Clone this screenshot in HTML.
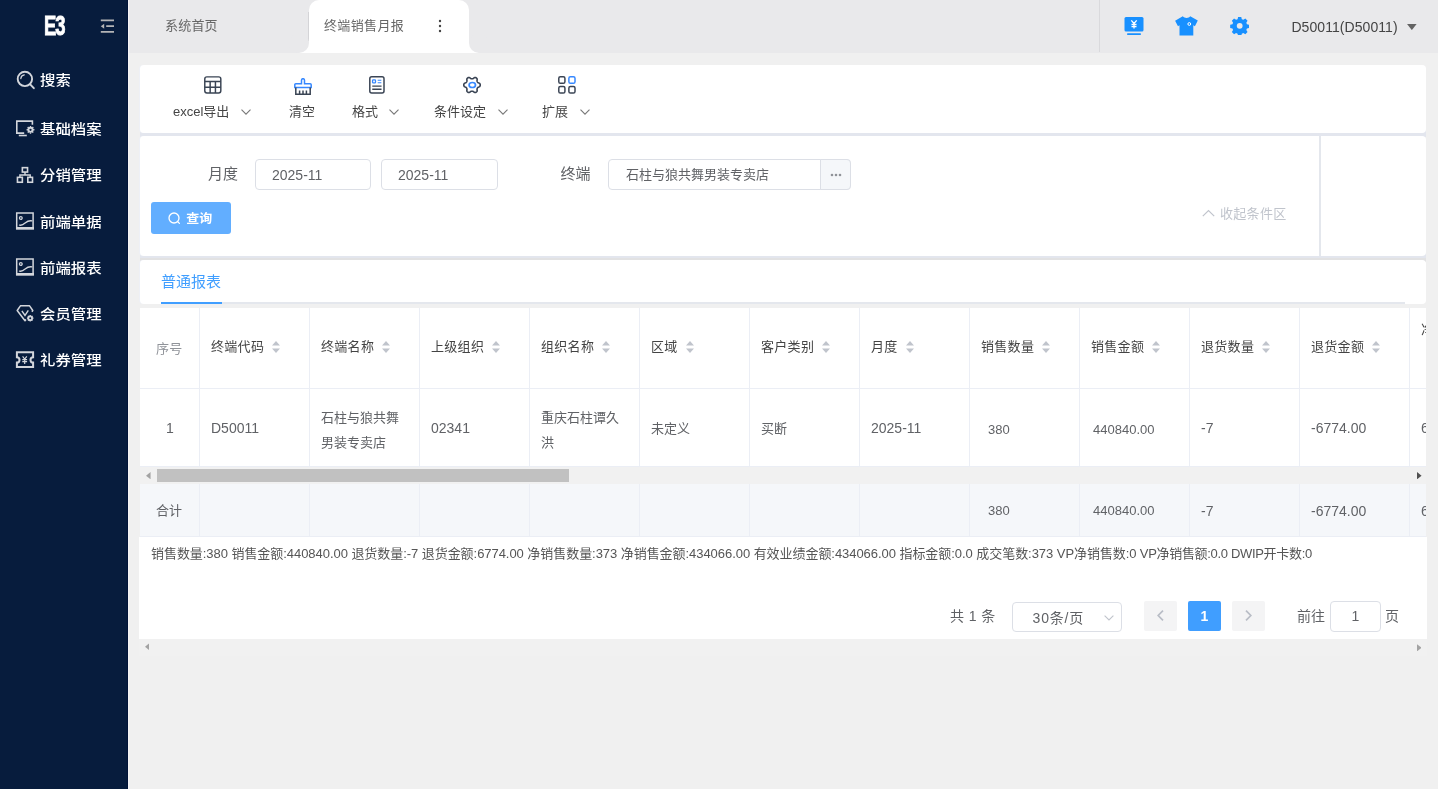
<!DOCTYPE html>
<html lang="zh-CN">
<head>
<meta charset="utf-8">
<title>终端销售月报</title>
<style>
*{box-sizing:border-box;margin:0;padding:0}
html,body{width:1438px;height:789px;overflow:hidden}
body{position:relative;will-change:transform;background:#f0f0f0;font-family:"Liberation Sans","Noto Sans CJK SC",sans-serif;font-size:13px;color:#606266}
.abs{position:absolute}
/* sidebar */
#side{position:absolute;left:0;top:0;width:128px;height:789px;background:#071c3d}
#side .logo{position:absolute;left:43.500px;top:8.500px;font-size:28px;font-weight:700;color:#fff;-webkit-text-stroke:.9px #fff;letter-spacing:-1.500px;line-height:34px;transform:scaleX(.66);transform-origin:0 0}
#side .mi{position:absolute;left:0;width:128px;height:24px;line-height:24px;color:#fff;font-size:15.400px;letter-spacing:0;font-weight:500;white-space:nowrap}
#side .mi span{position:absolute;left:40px;top:.5px;transform:scaleY(.89);transform-origin:0 50%}
#side .mi svg{position:absolute;left:15px}
/* topbar */
#top{position:absolute;left:128px;top:0;width:1310px;height:53px;background:#e9e9eb}
#top .t1{position:absolute;left:37px;top:.4px;line-height:52px;font-size:13px;letter-spacing:.2px;color:#666}
#tabA{position:absolute;left:181px;top:0;width:160px;height:53px;background:#fff;border-radius:10px 10px 0 0}
#tabA .tx{position:absolute;left:15px;top:.4px;line-height:52px;font-size:13px;letter-spacing:.35px;color:#666;white-space:nowrap}
.cornL,.cornR{position:absolute;top:43px;width:10px;height:10px;background:#fff}
.cornL{left:171px}.cornR{left:341px}
.cornL:after,.cornR:after{content:"";position:absolute;top:-10px;width:20px;height:20px;border-radius:10px;background:#e9e9eb}
.cornL:after{left:-10px}.cornR:after{left:0}
/* panels */
.panel{position:absolute;left:140px;width:1286px;background:#fff;border-radius:4px;box-shadow:-1px 0 0 #eef0f6}
.tb{position:absolute;top:0;height:66px;text-align:center;font-size:13px;color:#444;white-space:nowrap}
.tb svg{position:absolute}
.lb{top:36.500px;line-height:20px;font-size:13px;color:#444;white-space:nowrap}
.inp{position:absolute;height:31px;border:1px solid #dcdfe6;border-radius:4px;background:#fff;font-size:14px;color:#606266;line-height:30px;white-space:nowrap}
/* table */
.th,.td{position:absolute;white-space:nowrap}.th{letter-spacing:.3px}
</style>
</head>
<body>
<div id="side">
  <div class="logo">E3</div>
  <svg class="abs" style="left:100px;top:19px" width="15" height="15" viewBox="0 0 15 15" fill="none" stroke="#b4b4b6" stroke-width="1.700"><path d="M0.800 1.400h13.200M6.200 7.100h7.800M0.800 12.900h13.200"/><path d="M4.200 4.700v5L0.800 7.200z" fill="#b4b4b6" stroke="none"/></svg>
  <div class="mi" style="top:68px"><svg style="top:2px" width="20" height="20" viewBox="0 0 20 20" fill="none" stroke="#d3d6dc" stroke-width="1.600"><circle cx="9.900" cy="8.900" r="7.200" stroke-width="1.900"/><path d="M15.200 14.300l3.600 3.900" stroke-linecap="round" stroke-width="1.900"/><path d="M5.800 8.600a4.100 4.100 0 0 1 3.500-3.700" stroke-width="1.200" stroke-linecap="round"/></svg><span>搜索</span></div>
  <div class="mi" style="top:117px"><svg style="top:1px" width="20" height="20" viewBox="0 0 20 20" fill="none" stroke="#d3d6dc" stroke-width="1.600"><path d="M17.400 6.700V3.100H1.800v12H9.200"/><path d="M3.800 17.500h8"/><circle cx="15.500" cy="11.800" r="2.100" stroke-width="1.900"/><path d="M15.500 7.900v1.300M15.500 14.400v1.300M11.600 11.800h1.300M18.100 11.800h1.300M12.700 9l.9.900M17.400 13.700l.9.900M18.300 9l-.9.900M13.600 13.700l-.9.900" stroke-width="1.400"/></svg><span>基础档案</span></div>
  <div class="mi" style="top:163px"><svg style="top:2px" width="20" height="20" viewBox="0 0 20 20" fill="none" stroke="#d3d6dc" stroke-width="1.600"><rect x="7.350" y="2.650" width="5.200" height="4.400"/><rect x="2.450" y="12.350" width="4.900" height="4.900"/><rect x="12.800" y="12.350" width="4.700" height="4.900"/><path d="M10 7.100v3M4.900 12.300v-2.300h10.300v2.300" stroke-width="1.400"/></svg><span>分销管理</span></div>
  <div class="mi" style="top:210px"><svg style="top:2px" width="20" height="20" viewBox="0 0 20 20" fill="none" stroke="#d3d6dc" stroke-width="1.600"><path d="M1.700 .900h16.400v15.600H1.700z" stroke-width="1.500"/><path d="M1 16.300h18" stroke-width="2.600"/><circle cx="5.800" cy="6" r="1.400" stroke-width="1.200"/><path d="M4 13c3.200 1 4.700-.7 6.500-2.300s3.700-2.400 6.800-1.800" stroke-width="1.300"/></svg><span>前端单据</span></div>
  <div class="mi" style="top:256px"><svg style="top:2px" width="20" height="20" viewBox="0 0 20 20" fill="none" stroke="#d3d6dc" stroke-width="1.600"><path d="M1.700 .900h16.400v15.600H1.700z" stroke-width="1.500"/><path d="M1 16.300h18" stroke-width="2.600"/><circle cx="5.800" cy="6" r="1.400" stroke-width="1.200"/><path d="M4 13c3.200 1 4.700-.7 6.500-2.300s3.700-2.400 6.800-1.800" stroke-width="1.300"/></svg><span>前端报表</span></div>
  <div class="mi" style="top:302px"><svg style="top:2px" width="20" height="20" viewBox="0 0 20 20" fill="none" stroke="#d3d6dc" stroke-width="1.600"><path d="M11 15.500L10 16.700 2.200 6.500l3.200-4.700h9.200l3.200 4.700-.900 1.200" stroke-width="1.500" stroke-linejoin="round"/><path d="M6.900 6.800l3.100 4.600 3.300-5" stroke-width="1.400"/><g transform="translate(-.8 0)"><circle cx="16" cy="14.200" r="1.900" stroke-width="1.800"/><path d="M16 10.900v1.200M16 16.300v1.200M12.700 14.200h1.200M18.100 14.200h1.200M13.700 11.900l.9.900M17.400 15.600l.9.900M18.300 11.900l-.9.900M14.600 15.600l-.9.900" stroke-width="1.300"/></g></svg><span>会员管理</span></div>
  <div class="mi" style="top:348.500px"><svg style="top:1.500px" width="20" height="20" viewBox="0 0 20 20" fill="none" stroke="#d3d6dc" stroke-width="1.600"><path d="M1.900 2.300h16.200v5a2.600 2.600 0 0 0 0 5.200v4.600H1.900v-4.600a2.600 2.600 0 0 0 0-5.200z" stroke-width="2"/><path d="M7.600 6.300L9.700 9l2.100-2.700M9.700 9v5M7.300 9.600h4.800M7.300 11.700h4.800" stroke-width="1.200"/></svg><span>礼券管理</span></div>
</div>
<div class="abs" style="left:127px;top:0;width:1px;height:789px;background:#011338;z-index:3"></div><div class="abs" style="left:128px;top:0;width:1px;height:789px;background:#f5f4f6;z-index:3"></div>
<div id="top">
  <div class="t1">系统首页</div>
  <div class="abs" style="left:180px;top:12px;width:1px;height:29px;background:#d4d4d7"></div><div class="cornL"></div><div class="cornR"></div>
  <div id="tabA"><div class="tx">终端销售月报</div>
    <svg class="abs" style="left:128px;top:19px" width="6" height="14" viewBox="0 0 6 14" fill="#444"><circle cx="3" cy="2" r="1.2"/><circle cx="3" cy="7" r="1.2"/><circle cx="3" cy="12" r="1.2"/></svg>
  </div>
  <div class="abs" style="left:971px;top:0;width:1px;height:52px;background:#d9d9dc"></div>
  <svg class="abs" style="left:995.800px;top:16.500px" width="20" height="19" viewBox="0 0 20 19"><rect x="0.500" y="0" width="19" height="14.500" rx="1.500" fill="#1890ff"/><rect x="3" y="16.300" width="14" height="1.700" rx=".8" fill="#1890ff"/><path d="M7.300 3.300L10 6.500l2.700-3.200M10 6.500v5M7.500 7.300h5M7.500 9.500h5" stroke="#fff" stroke-width="1.300" fill="none"/></svg>
  <svg class="abs" style="left:1047px;top:16px" width="23" height="20" viewBox="0 0 23 20"><path d="M7.800 .300C9.500 2.600 13.800 2.600 15.200 .300L22.800 4.500 19.900 10.300 18.300 9.300V19.400H4.500V9.300L3 10.300 0.100 4.800z" fill="#1890ff"/><circle cx="14.300" cy="8" r="1.400" fill="none" stroke="#fff" stroke-width="1"/></svg>
  <svg class="abs" style="left:1101.500px;top:15.600px" width="19.400" height="19.400" viewBox="0 0 22 22"><path d="M9.200 1h3.600l.6 2.600 1.700.7 2.300-1.400 2.500 2.500-1.400 2.300.7 1.700 2.600.6v3.600l-2.600.6-.7 1.700 1.400 2.300-2.500 2.500-2.300-1.400-1.700.7-.6 2.600H9.200l-.6-2.600-1.700-.7-2.300 1.400-2.500-2.500 1.400-2.300-.7-1.700L.2 13.600V10l2.600-.6.700-1.700-1.400-2.300 2.500-2.500 2.300 1.400 1.700-.7z" fill="#1890ff" /><circle cx="11" cy="11.200" r="3.300" fill="#e9e9eb"/></svg>
  <div class="abs" style="left:1163.400px;top:.6px;line-height:52px;font-size:14px;letter-spacing:.07px;color:#444;white-space:nowrap">D50011(D50011)</div>
  <svg class="abs" style="left:1279px;top:23.700px" width="9.700" height="6.100" viewBox="0 0 11 7"><path d="M0 0h11L5.500 7z" fill="#636363"/></svg>
</div>
<div class="abs" style="left:140px;top:128px;width:1286px;height:9px;background:#e3e6ee"></div>
<div class="abs" style="left:140px;top:252px;width:1286px;height:5.500px;background:#e3e6ee"></div>
<div class="abs" style="left:140px;top:257.500px;width:1286px;height:4px;background:#e2e2e3"></div>
<div class="panel" id="p1" style="top:65px;height:67.500px">
  <svg class="abs" style="left:64.300px;top:11px" width="17.600" height="17.800" viewBox="0 0 18 18" fill="none" stroke="#3a4454" stroke-width="1.500"><rect x=".8" y=".8" width="16.400" height="16.400" rx="2.200"/><path d="M.8 5.600h16.400M.8 11.400h16.400M6.300 5.600v11.600M11.700 5.600v11.600"/></svg>
  <div class="abs lb" style="left:33px">excel导出</div><svg class="abs" style="left:101.300px;top:43.600px" width="10" height="6" viewBox="0 0 10 6" fill="none" stroke="#787878" stroke-width="1.100"><path d="M.5.600l4.500 4.500L9.500.600"/></svg>
  <svg class="abs" style="left:154px;top:13px" width="18" height="17" viewBox="0 0 18 17" fill="none" stroke-width="1.500"><path d="M7.500 5.700V2.200a1.500 1.500 0 0 1 3 0v3.500h5.700a1 1 0 0 1 1 1v2.700H.8V6.700a1 1 0 0 1 1-1z" stroke="#3688ff"/><path d="M1.800 9.400v6.800h14.400V9.400M5.600 12.600v3.600M9 12.600v3.600M12.400 12.600v3.600" stroke="#3a4454"/></svg>
  <div class="abs lb" style="left:149px">清空</div>
  <svg class="abs" style="left:229px;top:11px" width="15.800" height="17.800" viewBox="0 0 16 18" fill="none" stroke-width="1.500"><rect x=".8" y=".8" width="14.400" height="16.400" rx="2" stroke="#3a4454"/><rect x="3.600" y="4" width="3" height="3" rx=".8" stroke="#3688ff" stroke-width="1.300"/><path d="M8.800 4.300h3.700M8.800 6.800h3.700" stroke="#3688ff" stroke-width="1.200"/><path d="M3.300 10.300h9.400M3.300 13.400h9.400" stroke="#3a4454" stroke-width="1.300"/></svg>
  <div class="abs lb" style="left:212px">格式</div><svg class="abs" style="left:248.700px;top:43.600px" width="10" height="6" viewBox="0 0 10 6" fill="none" stroke="#787878" stroke-width="1.100"><path d="M.5.600l4.500 4.500L9.500.600"/></svg>
  <svg class="abs" style="left:323px;top:11px" width="18" height="18" viewBox="0 0 18 18" fill="none" stroke-width="1.600"><path d="M17.30 9.00L17.23 9.54L17.03 10.06L16.69 10.53L16.00 10.88L15.31 11.14L14.91 11.45L14.60 11.76L14.37 12.10L14.20 12.47L14.08 12.89L14.01 13.39L14.13 14.13L14.17 14.89L13.93 15.43L13.58 15.86L13.15 16.19L12.65 16.40L12.10 16.49L11.52 16.42L10.88 16.00L10.30 15.53L9.83 15.34L9.41 15.24L9.00 15.20L8.59 15.24L8.17 15.34L7.70 15.53L7.12 16.00L6.48 16.42L5.90 16.49L5.35 16.40L4.85 16.19L4.42 15.86L4.07 15.43L3.83 14.89L3.87 14.13L3.99 13.39L3.92 12.89L3.80 12.47L3.63 12.10L3.40 11.76L3.09 11.45L2.69 11.14L2.00 10.88L1.31 10.53L0.97 10.06L0.77 9.54L0.70 9.00L0.77 8.46L0.97 7.94L1.31 7.47L2.00 7.12L2.69 6.86L3.09 6.55L3.40 6.24L3.63 5.90L3.80 5.53L3.92 5.11L3.99 4.61L3.87 3.87L3.83 3.11L4.07 2.57L4.42 2.14L4.85 1.81L5.35 1.60L5.90 1.51L6.48 1.58L7.12 2.00L7.70 2.47L8.17 2.66L8.59 2.76L9.00 2.80L9.41 2.76L9.83 2.66L10.30 2.47L10.88 2.00L11.52 1.58L12.10 1.51L12.65 1.60L13.15 1.81L13.58 2.14L13.93 2.57L14.17 3.11L14.13 3.87L14.01 4.61L14.08 5.11L14.20 5.53L14.37 5.90L14.60 6.24L14.91 6.55L15.31 6.86L16.00 7.12L16.69 7.47L17.03 7.94L17.23 8.46z" stroke="#3a4454" stroke-linejoin="round"/><ellipse cx="9.300" cy="9" rx="3.200" ry="2.500" stroke="#3688ff" stroke-width="1.700"/></svg>
  <div class="abs lb" style="left:294px">条件设定</div><svg class="abs" style="left:357.700px;top:43.600px" width="10" height="6" viewBox="0 0 10 6" fill="none" stroke="#787878" stroke-width="1.100"><path d="M.5.600l4.500 4.500L9.500.600"/></svg>
  <svg class="abs" style="left:418.200px;top:11px" width="17.800" height="17.800" viewBox="0 0 18 18" fill="none" stroke-width="1.500"><rect x=".8" y=".8" width="6.200" height="6.600" rx="1.600" stroke="#3a4454"/><rect x="11" y=".8" width="6.200" height="6.600" rx="1.600" stroke="#3688ff"/><rect x=".8" y="10.600" width="6.200" height="6.600" rx="1.600" stroke="#3a4454"/><rect x="11" y="10.600" width="6.200" height="6.600" rx="1.600" stroke="#3a4454"/></svg>
  <div class="abs lb" style="left:402px">扩展</div><svg class="abs" style="left:439.700px;top:43.600px" width="10" height="6" viewBox="0 0 10 6" fill="none" stroke="#787878" stroke-width="1.100"><path d="M.5.600l4.500 4.500L9.500.600"/></svg>
</div>
<div class="panel" id="p2" style="top:136px;height:120px">
  <div class="abs" style="left:68px;top:27px;font-size:15px;line-height:22px;color:#606266">月度</div>
  <div class="inp" style="left:115px;top:23px;width:116px;padding-left:16px">2025-11</div>
  <div class="inp" style="left:241px;top:23px;width:117px;padding-left:16px">2025-11</div>
  <div class="abs" style="left:420.500px;top:27px;font-size:15px;line-height:22px;color:#606266">终端</div>
  <div class="inp" style="left:468px;top:23px;width:243px;padding-left:17px;font-size:13px">石柱与狼共舞男装专卖店</div>
  <div class="abs" style="left:680px;top:23px;width:31px;height:31px;border:1px solid #dcdfe6;border-radius:0 4px 4px 0;background:#f5f7fa"><svg class="abs" style="left:9px;top:13px" width="12" height="4" viewBox="0 0 12 4" fill="#909399"><circle cx="2" cy="2" r="1.300"/><circle cx="6" cy="2" r="1.300"/><circle cx="10" cy="2" r="1.300"/></svg></div>
  <div class="abs" style="left:11px;top:66px;width:80px;height:32px;border-radius:3px;background:#62aeff;color:#fff;font-size:13px;font-weight:700;line-height:32px"><svg class="abs" style="left:17px;top:10px" width="13" height="13" viewBox="0 0 13 13" fill="none" stroke="#fff" stroke-width="1.300"><circle cx="6" cy="6" r="5"/><path d="M9.800 9.800l1.600 1.600" stroke-linecap="round"/></svg><span class="abs" style="left:35.200px;top:.5px;transform:scaleY(.92);transform-origin:0 50%">查询</span></div>
  <svg class="abs" style="left:1062px;top:73px" width="13" height="8" viewBox="0 0 13 8" fill="none" stroke="#c0c4cc" stroke-width="1.200"><path d="M.8 7.200l5.700-5.700 5.700 5.700"/></svg>
  <div class="abs" style="left:1080px;top:67px;font-size:13px;letter-spacing:.3px;line-height:22px;color:#c0c4cc;white-space:nowrap">收起条件区</div>
  <div class="abs" style="left:1179px;top:0;width:1.500px;height:120px;background:#e4e7ed"></div>
</div>
<div class="panel" id="p3" style="top:260px;height:44px">
  <div class="abs" style="left:21px;top:11px;font-size:15px;line-height:22px;color:#409eff">普通报表</div>
  <div class="abs" style="left:21px;top:42px;width:1244px;height:2px;background:#e4e7ed"></div>
  <div class="abs" style="left:21px;top:42px;width:61px;height:2px;background:#409eff"></div>
</div>
<div class="abs" style="left:139px;top:537px;width:1288px;height:102.300px;background:#fff"></div>
<div class="abs" style="left:139px;top:639.300px;width:1288px;height:16.700px;background:#f1f1f1"></div>
<div id="tbl" class="abs" style="left:140px;top:308px;width:1286px;height:331px;background:#fff;overflow:hidden">
<div class="abs" style="left:0;top:80px;width:1286px;height:1px;background:#ebeef5"></div>
<div class="abs" style="left:0;top:158px;width:1286px;height:1px;background:#ebeef5"></div>
<div class="abs" style="left:0;top:159px;width:1286px;height:17px;background:#f1f1f1"></div>
<div class="abs" style="left:17px;top:161px;width:412px;height:13px;background:#c1c1c1"></div>
<svg class="abs" style="left:6px;top:163.700px" width="4.600" height="7.300" viewBox="0 0 5 8"><path d="M5 0v8L0 4z" fill="#a3a3a3"/></svg>
<svg class="abs" style="left:1277px;top:163.700px" width="4.600" height="7.300" viewBox="0 0 5 8"><path d="M0 0v8l5-4z" fill="#505050"/></svg>
<div class="abs" style="left:0;top:176px;width:1286px;height:52px;background:#f5f7fa"></div>
<div class="abs" style="left:0;top:228px;width:1286px;height:1px;background:#ebeef5"></div>
<div class="abs" style="left:59px;top:0;width:1px;height:159px;background:#ebeef5"></div>
<div class="abs" style="left:59px;top:176px;width:1px;height:52px;background:#ebeef5"></div>
<div class="abs" style="left:169px;top:0;width:1px;height:159px;background:#ebeef5"></div>
<div class="abs" style="left:169px;top:176px;width:1px;height:52px;background:#ebeef5"></div>
<div class="abs" style="left:279px;top:0;width:1px;height:159px;background:#ebeef5"></div>
<div class="abs" style="left:279px;top:176px;width:1px;height:52px;background:#ebeef5"></div>
<div class="abs" style="left:389px;top:0;width:1px;height:159px;background:#ebeef5"></div>
<div class="abs" style="left:389px;top:176px;width:1px;height:52px;background:#ebeef5"></div>
<div class="abs" style="left:499px;top:0;width:1px;height:159px;background:#ebeef5"></div>
<div class="abs" style="left:499px;top:176px;width:1px;height:52px;background:#ebeef5"></div>
<div class="abs" style="left:609px;top:0;width:1px;height:159px;background:#ebeef5"></div>
<div class="abs" style="left:609px;top:176px;width:1px;height:52px;background:#ebeef5"></div>
<div class="abs" style="left:719px;top:0;width:1px;height:159px;background:#ebeef5"></div>
<div class="abs" style="left:719px;top:176px;width:1px;height:52px;background:#ebeef5"></div>
<div class="abs" style="left:829px;top:0;width:1px;height:159px;background:#ebeef5"></div>
<div class="abs" style="left:829px;top:176px;width:1px;height:52px;background:#ebeef5"></div>
<div class="abs" style="left:939px;top:0;width:1px;height:159px;background:#ebeef5"></div>
<div class="abs" style="left:939px;top:176px;width:1px;height:52px;background:#ebeef5"></div>
<div class="abs" style="left:1049px;top:0;width:1px;height:159px;background:#ebeef5"></div>
<div class="abs" style="left:1049px;top:176px;width:1px;height:52px;background:#ebeef5"></div>
<div class="abs" style="left:1159px;top:0;width:1px;height:159px;background:#ebeef5"></div>
<div class="abs" style="left:1159px;top:176px;width:1px;height:52px;background:#ebeef5"></div>
<div class="abs" style="left:1269px;top:0;width:1px;height:159px;background:#ebeef5"></div>
<div class="abs" style="left:1269px;top:176px;width:1px;height:52px;background:#ebeef5"></div>
<div class="th" style="left:16px;top:30px;line-height:22px;color:#909399">序号</div>
<div class="th" style="left:71px;top:27.700px;line-height:22px;color:#444">终端代码</div>
<svg class="abs" style="left:132px;top:33px" width="8" height="12" viewBox="0 0 8 12" fill="#c0c4cc"><path d="M4 0l4 4.500H0zM4 12L0 7.500h8z"/></svg>
<div class="th" style="left:181px;top:27.700px;line-height:22px;color:#444">终端名称</div>
<svg class="abs" style="left:242px;top:33px" width="8" height="12" viewBox="0 0 8 12" fill="#c0c4cc"><path d="M4 0l4 4.500H0zM4 12L0 7.500h8z"/></svg>
<div class="th" style="left:291px;top:27.700px;line-height:22px;color:#444">上级组织</div>
<svg class="abs" style="left:352px;top:33px" width="8" height="12" viewBox="0 0 8 12" fill="#c0c4cc"><path d="M4 0l4 4.500H0zM4 12L0 7.500h8z"/></svg>
<div class="th" style="left:401px;top:27.700px;line-height:22px;color:#444">组织名称</div>
<svg class="abs" style="left:462px;top:33px" width="8" height="12" viewBox="0 0 8 12" fill="#c0c4cc"><path d="M4 0l4 4.500H0zM4 12L0 7.500h8z"/></svg>
<div class="th" style="left:511px;top:27.700px;line-height:22px;color:#444">区域</div>
<svg class="abs" style="left:546px;top:33px" width="8" height="12" viewBox="0 0 8 12" fill="#c0c4cc"><path d="M4 0l4 4.500H0zM4 12L0 7.500h8z"/></svg>
<div class="th" style="left:621px;top:27.700px;line-height:22px;color:#444">客户类别</div>
<svg class="abs" style="left:682px;top:33px" width="8" height="12" viewBox="0 0 8 12" fill="#c0c4cc"><path d="M4 0l4 4.500H0zM4 12L0 7.500h8z"/></svg>
<div class="th" style="left:731px;top:27.700px;line-height:22px;color:#444">月度</div>
<svg class="abs" style="left:766px;top:33px" width="8" height="12" viewBox="0 0 8 12" fill="#c0c4cc"><path d="M4 0l4 4.500H0zM4 12L0 7.500h8z"/></svg>
<div class="th" style="left:841px;top:27.700px;line-height:22px;color:#444">销售数量</div>
<svg class="abs" style="left:902px;top:33px" width="8" height="12" viewBox="0 0 8 12" fill="#c0c4cc"><path d="M4 0l4 4.500H0zM4 12L0 7.500h8z"/></svg>
<div class="th" style="left:951px;top:27.700px;line-height:22px;color:#444">销售金额</div>
<svg class="abs" style="left:1012px;top:33px" width="8" height="12" viewBox="0 0 8 12" fill="#c0c4cc"><path d="M4 0l4 4.500H0zM4 12L0 7.500h8z"/></svg>
<div class="th" style="left:1061px;top:27.700px;line-height:22px;color:#444">退货数量</div>
<svg class="abs" style="left:1122px;top:33px" width="8" height="12" viewBox="0 0 8 12" fill="#c0c4cc"><path d="M4 0l4 4.500H0zM4 12L0 7.500h8z"/></svg>
<div class="th" style="left:1171px;top:27.700px;line-height:22px;color:#444">退货金额</div>
<svg class="abs" style="left:1232px;top:33px" width="8" height="12" viewBox="0 0 8 12" fill="#c0c4cc"><path d="M4 0l4 4.500H0zM4 12L0 7.500h8z"/></svg>
<div class="th" style="left:1281px;top:11px;line-height:22px;color:#444">净</div>
<div class="td" style="left:26px;top:109px;line-height:22px;font-size:14px;">1</div>
<div class="td" style="left:71px;top:109px;line-height:22px;font-size:14px;">D50011</div>
<div class="td" style="left:181px;top:96.500px;line-height:22px;line-height:25px;">石柱与狼共舞<br>男装专卖店</div>
<div class="td" style="left:291px;top:109px;line-height:22px;font-size:14px;">02341</div>
<div class="td" style="left:401px;top:96.500px;line-height:22px;line-height:25px;">重庆石柱谭久<br>洪</div>
<div class="td" style="left:511px;top:109.600px;line-height:22px;">未定义</div>
<div class="td" style="left:621px;top:109.600px;line-height:22px;">买断</div>
<div class="td" style="left:731px;top:109px;line-height:22px;font-size:14px;">2025-11</div>
<div class="td" style="left:848px;top:110.600px;line-height:22px;">380</div>
<div class="td" style="left:953px;top:110.600px;line-height:22px;">440840.00</div>
<div class="td" style="left:1061px;top:109px;line-height:22px;font-size:14px;">-7</div>
<div class="td" style="left:1171px;top:109px;line-height:22px;font-size:14px;">-6774.00</div>
<div class="td" style="left:1281px;top:109px;line-height:22px;font-size:14px;">6</div>
<div class="td" style="left:16px;top:192px;line-height:22px;">合计</div>
<div class="td" style="left:848px;top:191.700px;line-height:22px;">380</div>
<div class="td" style="left:953px;top:191.700px;line-height:22px;">440840.00</div>
<div class="td" style="left:1061px;top:191.700px;line-height:22px;font-size:14px;">-7</div>
<div class="td" style="left:1171px;top:191.700px;line-height:22px;font-size:14px;">-6774.00</div>
<div class="td" style="left:1281px;top:191.700px;line-height:22px;font-size:14px;">6</div>
<div class="td" id="sum" style="left:11px;top:236px;line-height:20px;font-size:13px;letter-spacing:-.05px;color:#555">销售数量:380 销售金额:440840.00 退货数量:-7 退货金额:6774.00 净销售数量:373 净销售金额:434066.00 有效业绩金额:434066.00 指标金额:0.0 成交笔数:373 VP净销售数:0<span style="letter-spacing:-.32px"> VP净销售额:0.0 DWIP开卡数:0</span></div>
<div class="td" style="left:810px;top:297px;line-height:22px;font-size:14px;word-spacing:.5px;letter-spacing:.15px;color:#606266">共 1 条</div>
<div class="inp" style="left:872px;top:294px;width:110px;height:30px;padding-left:19.500px;line-height:30px;font-size:14px;letter-spacing:.85px">30条/页<svg class="abs" style="left:91px;top:12px" width="10" height="6" viewBox="0 0 10 6" fill="none" stroke="#c0c4cc" stroke-width="1.100"><path d="M.6.600l4.400 4.400L9.400.600"/></svg></div>
<div class="abs" style="left:1004px;top:293px;width:33px;height:30px;border-radius:2px;background:#f4f4f5"><svg class="abs" style="left:13px;top:9px" width="7" height="11" viewBox="0 0 7 11" fill="none" stroke="#b9bdc6" stroke-width="1.700"><path d="M6 .700L1.200 5.500 6 10.300"/></svg></div>
<div class="abs" style="left:1048px;top:293px;width:33px;height:30px;border-radius:2px;background:#409eff;color:#fff;font-weight:700;font-size:14px;text-align:center;line-height:30px">1</div>
<div class="abs" style="left:1092px;top:293px;width:33px;height:30px;border-radius:2px;background:#f4f4f5"><svg class="abs" style="left:13px;top:9px" width="7" height="11" viewBox="0 0 7 11" fill="none" stroke="#b9bdc6" stroke-width="1.700"><path d="M1 .700l4.800 4.800L1 10.300"/></svg></div>
<div class="td" style="left:1157px;top:297px;line-height:22px;font-size:14px;color:#606266">前往</div>
<div class="inp" style="left:1190px;top:293px;width:51px;height:30.600px;text-align:center;line-height:29px;font-size:14px">1</div>
<div class="td" style="left:1245px;top:297px;line-height:22px;font-size:14px;color:#606266">页</div>
</div>
<svg class="abs" style="left:144.600px;top:643.200px" width="4.500" height="7.500" viewBox="0 0 5 8"><path d="M5 0v8L0 4z" fill="#a3a3a3"/></svg>
<svg class="abs" style="left:1416.700px;top:643.600px" width="4.500" height="7.500" viewBox="0 0 5 8"><path d="M0 0v8l5-4z" fill="#a3a3a3"/></svg>
</body>
</html>
